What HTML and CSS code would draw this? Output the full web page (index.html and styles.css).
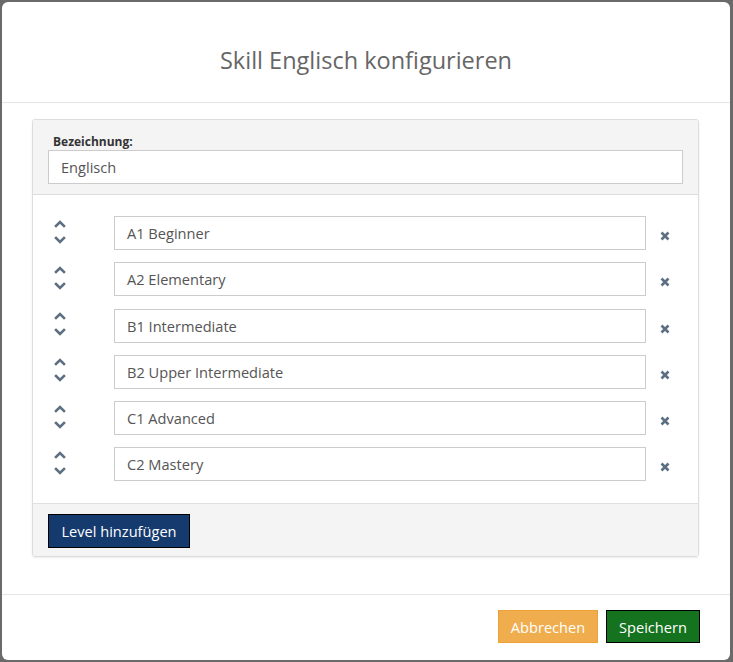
FILE: index.html
```html
<!DOCTYPE html>
<html lang="de">
<head>
<meta charset="utf-8">
<title>Skill konfigurieren</title>
<link rel="stylesheet" href="styles.css">
</head>
<body>
<div class="modal">
  <div class="modal-header">
    <h1 class="modal-title">Skill Englisch konfigurieren</h1>
  </div>
  <div class="modal-body">
    <div class="panel">
      <div class="panel-heading">
        <label class="label">Bezeichnung:</label>
        <div class="input">Englisch</div>
      </div>
      <div class="panel-body">
        <div class="row">
          <div class="order"><svg class="chev" viewBox="0 0 12 8"><polyline points="2,6 6,2 10,6"/></svg><svg class="chev" viewBox="0 0 12 8"><polyline points="2,2 6,6 10,2"/></svg></div>
          <div class="input">A1 Beginner</div>
          <div class="del"><svg class="x" viewBox="0 0 10 10"><path d="M1.5 1.5L8.5 8.5M8.5 1.5L1.5 8.5"/></svg></div>
        </div>
        <div class="row">
          <div class="order"><svg class="chev" viewBox="0 0 12 8"><polyline points="2,6 6,2 10,6"/></svg><svg class="chev" viewBox="0 0 12 8"><polyline points="2,2 6,6 10,2"/></svg></div>
          <div class="input">A2 Elementary</div>
          <div class="del"><svg class="x" viewBox="0 0 10 10"><path d="M1.5 1.5L8.5 8.5M8.5 1.5L1.5 8.5"/></svg></div>
        </div>
        <div class="row">
          <div class="order"><svg class="chev" viewBox="0 0 12 8"><polyline points="2,6 6,2 10,6"/></svg><svg class="chev" viewBox="0 0 12 8"><polyline points="2,2 6,6 10,2"/></svg></div>
          <div class="input">B1 Intermediate</div>
          <div class="del"><svg class="x" viewBox="0 0 10 10"><path d="M1.5 1.5L8.5 8.5M8.5 1.5L1.5 8.5"/></svg></div>
        </div>
        <div class="row">
          <div class="order"><svg class="chev" viewBox="0 0 12 8"><polyline points="2,6 6,2 10,6"/></svg><svg class="chev" viewBox="0 0 12 8"><polyline points="2,2 6,6 10,2"/></svg></div>
          <div class="input">B2 Upper Intermediate</div>
          <div class="del"><svg class="x" viewBox="0 0 10 10"><path d="M1.5 1.5L8.5 8.5M8.5 1.5L1.5 8.5"/></svg></div>
        </div>
        <div class="row">
          <div class="order"><svg class="chev" viewBox="0 0 12 8"><polyline points="2,6 6,2 10,6"/></svg><svg class="chev" viewBox="0 0 12 8"><polyline points="2,2 6,6 10,2"/></svg></div>
          <div class="input">C1 Advanced</div>
          <div class="del"><svg class="x" viewBox="0 0 10 10"><path d="M1.5 1.5L8.5 8.5M8.5 1.5L1.5 8.5"/></svg></div>
        </div>
        <div class="row">
          <div class="order"><svg class="chev" viewBox="0 0 12 8"><polyline points="2,6 6,2 10,6"/></svg><svg class="chev" viewBox="0 0 12 8"><polyline points="2,2 6,6 10,2"/></svg></div>
          <div class="input">C2 Mastery</div>
          <div class="del"><svg class="x" viewBox="0 0 10 10"><path d="M1.5 1.5L8.5 8.5M8.5 1.5L1.5 8.5"/></svg></div>
        </div>
      </div>
      <div class="panel-footer">
        <button class="btn btn-primary">Level hinzufügen</button>
      </div>
    </div>
  </div>
  <div class="modal-footer">
    <button class="btn btn-warning">Abbrechen</button>
    <button class="btn btn-success">Speichern</button>
  </div>
</div>
</body>
</html>
```
FILE: styles.css
```css
* { box-sizing: border-box; }
html, body { margin: 0; padding: 0; }
body {
  background: #6a6a6a;
  font-family: "Open Sans", "Noto Sans", sans-serif;
  width: 733px;
  height: 662px;
  overflow: hidden;
  padding: 2px 3px 2px 2px;
}
.modal {
  background: #fff;
  border-radius: 6px;
  width: 728px;
  height: 658px;
  display: flex;
  flex-direction: column;
}
.modal-header {
  height: 101px;
  border-bottom: 1px solid #e5e5e5;
  display: flex;
  align-items: center;
  justify-content: center;
  padding-top: 16px;
}
.modal-title {
  margin: 0;
  font-weight: 400;
  font-size: 23.5px;
  color: #666;
}
.modal-body {
  padding: 16px 31px 33px 30px;
}
.panel {
  border: 1px solid #ddd;
  border-radius: 3px;
  box-shadow: 0 1px 2px rgba(0,0,0,0.08);
}
.panel-heading {
  background: #f4f4f4;
  border-bottom: 1px solid #ddd;
  padding: 13px 15px 10px 15px;
  border-radius: 3px 3px 0 0;
}
.label {
  display: block;
  font-size: 12px;
  font-weight: 700;
  color: #333;
  line-height: 17px;
  padding-left: 5px;
}
.input {
  height: 34px;
  border: 1px solid #ccc;
  background: #fff;
  font-size: 14.6px;
  color: #555;
  padding: 0 12px;
  display: flex;
  align-items: center;
  flex: 1;
}
.panel-body {
  padding: 21px 15px 22px 15px;
  display: flex;
  flex-direction: column;
  gap: 12.25px;
}
.row {
  display: flex;
  align-items: stretch;
}
.order {
  width: 66px;
  display: flex;
  flex-direction: column;
  justify-content: flex-start;
  align-items: flex-start;
  padding-left: 6px;
  padding-top: 3.5px;
  gap: 8px;
}
.chev {
  width: 12px;
  height: 8px;
  display: block;
  fill: none;
  stroke: #5d6f82;
  stroke-width: 2.6;
  stroke-linecap: square;
}
.del {
  width: 37px;
  display: flex;
  align-items: center;
  justify-content: center;
  padding-top: 6px;
}
.x {
  width: 10px;
  height: 10px;
  fill: none;
  stroke: #5d6f82;
  stroke-width: 2.6;
}
.panel-footer {
  background: #f4f4f4;
  border-top: 1px solid #e0e0e0;
  padding: 10px 15px 8px 15px;
  border-radius: 0 0 3px 3px;
}
.btn {
  font-family: "Open Sans", "Noto Sans", sans-serif;
  font-size: 14.6px;
  color: #fff;
  height: 34px;
  padding: 0 10px;
  border-radius: 0;
  cursor: pointer;
}
.btn-primary {
  background: #143a6e;
  border: 1px solid #000;
  width: 142px;
}
.modal-footer {
  margin-top: auto;
  border-top: 1px solid #e5e5e5;
  padding: 15px 30px 17px 15px;
  display: flex;
  justify-content: flex-end;
  gap: 8px;
}
.btn-warning {
  background: #f0ad4e;
  border: 1px solid #eea236;
  width: 100px;
  height: 33px;
}
.btn-success {
  background: #15721f;
  border: 1px solid #000;
  width: 94px;
  height: 33px;
}
```
